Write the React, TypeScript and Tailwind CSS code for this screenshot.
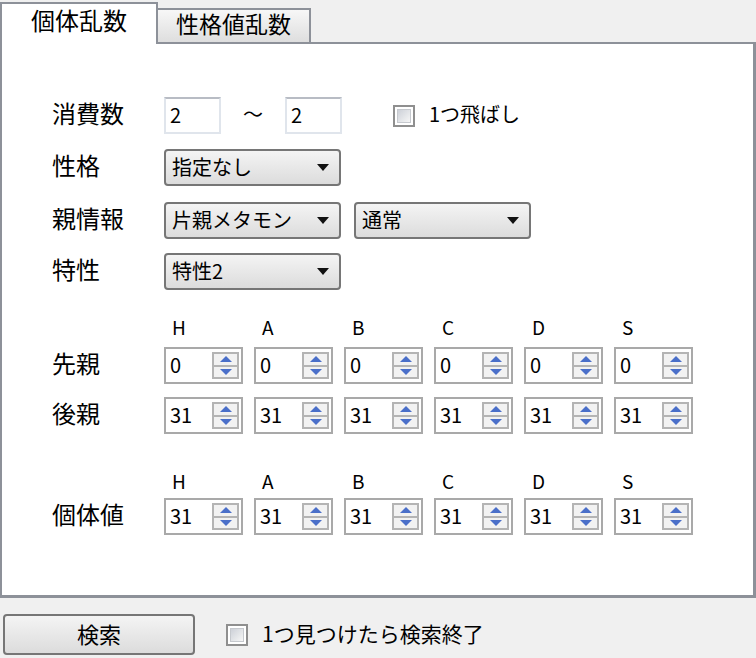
import React from 'react';

const font = "font-['Noto_Sans_CJK_JP',_'Noto_Sans',_sans-serif]";

function Arrow() {
  return (
    <svg width="12" height="7" viewBox="0 0 12 7" className="shrink-0">
      <path d="M0 0 L12 0 L6 7 Z" fill="#111" />
    </svg>
  );
}

function Select({ label, width = 'w-[177px]' }: { label: string; width?: string }) {
  return (
    <div
      className={`${width} h-[37px] rounded-[4px] border-2 border-[#767676] bg-gradient-to-b from-[#f4f4f4] to-[#dcdcdc] flex items-center justify-between pl-[6px] pr-[10px]`}
    >
      <span className="text-[20px] leading-none text-black pb-[2px]">{label}</span>
      <Arrow />
    </div>
  );
}

function TextBox({ value }: { value: string }) {
  return (
    <div className="w-[57px] h-[37px] border-2 border-[#e0e5ec] border-t-[#b8bcc4] bg-white flex items-center pl-[4px]">
      <span className="text-[20px] leading-none pb-[2px]">{value}</span>
    </div>
  );
}

function CheckBox({ label, size = 'text-[20px]' }: { label: string; size?: string }) {
  return (
    <div className="flex items-center gap-[14px]">
      <div className="w-[22px] h-[22px] border-2 border-[#8f8f8f] bg-white p-[2px]">
        <div className="w-full h-full border border-[#c6c9ce] bg-gradient-to-br from-[#cdd1d8] to-[#f6f6f6]" />
      </div>
      <span className={`${size} leading-none pb-[3px]`}>{label}</span>
    </div>
  );
}

function Spinner({ value }: { value: string }) {
  return (
    <div className="w-[79px] h-[37px] border-2 border-[#a9a9a9] bg-white flex items-center">
      <span className="flex-1 pl-[4px] text-[20px] leading-none pb-[2px]">{value}</span>
      <div className="w-[27px] h-[27px] mr-[2px] border-2 border-[#b4b4b4] bg-[#f2f2f2] flex flex-col">
        <div className="flex-1 flex items-center justify-center">
          <svg width="12" height="6" viewBox="0 0 12 6">
            <path d="M0 6 L6 0 L12 6 Z" fill="#4a6fc9" />
          </svg>
        </div>
        <div className="h-[2px] bg-[#b4b4b4]" />
        <div className="flex-1 flex items-center justify-center">
          <svg width="12" height="6" viewBox="0 0 12 6">
            <path d="M0 0 L12 0 L6 6 Z" fill="#4a6fc9" />
          </svg>
        </div>
      </div>
    </div>
  );
}

const stats = ['H', 'A', 'B', 'C', 'D', 'S'];

function StatHeader() {
  return (
    <div className="flex items-center h-[24px]">
      <div className="w-[112px]" />
      <div className="grid grid-cols-[repeat(6,79px)] gap-x-[11px]">
        {stats.map((s) => (
          <span key={s} className="pl-[8px] text-[19px] leading-none">
            {s}
          </span>
        ))}
      </div>
    </div>
  );
}

function Label({ text, width = 'w-[112px]' }: { text: string; width?: string }) {
  return <span className={`${width} text-[24px] leading-none pb-[5px]`}>{text}</span>;
}

function StatRow({ label, value }: { label: string; value: string }) {
  return (
    <div className="flex items-center">
      <Label text={label} />
      <div className="grid grid-cols-[repeat(6,79px)] gap-x-[11px]">
        {stats.map((s) => (
          <Spinner key={s} value={value} />
        ))}
      </div>
    </div>
  );
}

export default function App() {
  return (
    <div className={`w-[756px] h-[658px] bg-[#f0f0f0] text-black ${font} overflow-hidden`}>
      {/* Tabs */}
      <div className="flex items-end h-[42px]">
        <div className="w-[158px] h-[42px] bg-white border-2 border-b-0 border-[#8d9199] flex items-start justify-center pt-[4px] relative z-10 -mb-[2px]">
          <span className="text-[24px] leading-none">個体乱数</span>
        </div>
        <div className="w-[153px] h-[34px] bg-gradient-to-b from-[#f7f7f7] to-[#dedede] border-2 border-l-0 border-b-0 border-[#8d9199] flex items-center justify-center">
          <span className="text-[23px] leading-none pb-[5px]">性格値乱数</span>
        </div>
      </div>

      {/* Panel */}
      <div className="h-[556px] bg-white border-2 border-[#8d9199] border-r-[3px] border-b-[3px] pl-[50px] pt-[53px]">
        <div className="flex items-center">
          <Label text="消費数" />
          <TextBox value="2" />
          <span className="w-[64px] text-center text-[20px] pb-[4px]">〜</span>
          <TextBox value="2" />
          <div className="ml-[51px]">
            <CheckBox label="1つ飛ばし" />
          </div>
        </div>

        <div className="flex items-center mt-[15px]">
          <Label text="性格" />
          <Select label="指定なし" />
        </div>

        <div className="flex items-center mt-[16px] gap-[13px]">
          <Label text="親情報" width="w-[99px]" />
          <Select label="片親メタモン" />
          <Select label="通常" />
        </div>

        <div className="flex items-center mt-[14px]">
          <Label text="特性" />
          <Select label="特性2" />
        </div>

        <div className="mt-[24px]">
          <StatHeader />
        </div>
        <div className="mt-[9px]">
          <StatRow label="先親" value="0" />
        </div>
        <div className="mt-[13px]">
          <StatRow label="後親" value="31" />
        </div>

        <div className="mt-[34px]">
          <StatHeader />
        </div>
        <div className="mt-[6px]">
          <StatRow label="個体値" value="31" />
        </div>
      </div>

      {/* Footer */}
      <div className="flex items-center mt-[16px] pl-[3px]">
        <div className="w-[192px] h-[41px] rounded-[4px] border-2 border-[#767676] bg-gradient-to-b from-[#f4f4f4] to-[#dcdcdc] flex items-center justify-center">
          <span className="text-[22px] leading-none pb-[3px]">検索</span>
        </div>
        <div className="ml-[31px]">
          <CheckBox label="1つ見つけたら検索終了" size="text-[21px]" />
        </div>
      </div>
    </div>
  );
}
